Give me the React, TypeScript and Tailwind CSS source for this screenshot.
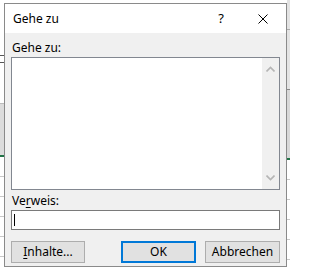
import React from "react";

const font = { fontFamily: '"Segoe UI", "Noto Sans", "Open Sans", sans-serif' };

function Chevron({ up }: { up?: boolean }) {
  return (
    <svg width="9" height="6" viewBox="0 0 9 6" className="block">
      <path
        d={up ? "M0.5 5.5 L4.5 1.5 L8.5 5.5" : "M0.5 0.5 L4.5 4.5 L8.5 0.5"}
        fill="none"
        stroke="#b5b5b5"
        strokeWidth="1.6"
      />
    </svg>
  );
}

export default function App() {
  return (
    <div
      className="relative w-[290px] h-[273px] overflow-hidden bg-white pl-[4px] pt-[3px] text-[12px] text-black"
      style={font}
    >
      {/* background spreadsheet hints */}
      <div className="absolute left-0 top-0 w-[4px] h-[273px] flex flex-col">
        <div className="h-[55px] bg-white" />
        <div className="h-[8px] border-y border-[#555] bg-white" />
        <div className="h-[40px] bg-white" />
        <div className="h-[52px] bg-[#dcdcdc] border-t border-[#bbb]" />
        <div className="h-[2px] bg-[#217346]" />
        <div className="flex-1 bg-[repeating-linear-gradient(to_bottom,#ffffff_0px,#ffffff_19px,#c8c8c8_19px,#c8c8c8_20px)]" />
      </div>
      <div className="absolute right-0 top-0 w-[3px] h-[273px] flex flex-col">
        <div className="h-[30px] bg-[#e3e3e3] border-b border-[#aaa]" />
        <div className="h-[60px] bg-[#e3e3e3] border-b border-[#888]" />
        <div className="h-[68px] bg-[#d8d8d8]" />
        <div className="h-[2px] bg-[#217346]" />
        <div className="flex-1 bg-[repeating-linear-gradient(to_bottom,#ffffff_0px,#ffffff_19px,#c8c8c8_19px,#c8c8c8_20px)]" />
      </div>

      {/* dialog */}
      <div className="relative w-[283px] h-[264px] border border-[#8a8a8a] bg-[#f0f0f0] flex flex-col">
        <div className="h-[29px] bg-white flex items-center">
          <span className="pl-[8px] flex-1 leading-none">Gehe zu</span>
          <span className="w-[16px] text-center text-[13px] leading-none mr-[29px]">?</span>
          <span className="w-[10px] mr-[18px]">
            <svg width="10" height="10" viewBox="0 0 10 10" className="block">
              <path d="M0.5 0.5 L9.5 9.5 M9.5 0.5 L0.5 9.5" stroke="#000" strokeWidth="1" />
            </svg>
          </span>
        </div>
        <div className="flex flex-col px-[6px] pt-[7px]">
          <div className="h-[16px] leading-[16px] pl-[1px]">Gehe zu:</div>
          <div className="mt-[1px] h-[133px] border border-[#828790] bg-white flex justify-end">
            <div className="w-[17px] bg-[#f0f0f0] flex flex-col justify-between items-center py-[8px]">
              <Chevron up />
              <Chevron />
            </div>
          </div>
          <div className="mt-[3px] h-[16px] leading-[16px] pl-[1px]">
            Ve<span className="underline underline-offset-2">r</span>weis:
          </div>
          <div className="mt-[1px] h-[20px] border border-[#7a7a7a] bg-white flex items-center pl-[2px]">
            <div className="w-[1px] h-[12px] bg-black" />
          </div>
          <div className="mt-[11px] flex items-center">
            <div className="w-[74px] h-[22px] border border-[#adadad] bg-[#e1e1e1] flex items-center justify-center">
              <span>
                <span className="underline underline-offset-2">I</span>nhalte...
              </span>
            </div>
            <div className="ml-[36px] w-[75px] h-[22px] border-2 border-[#0078d7] bg-[#e1e1e1] flex items-center justify-center">
              OK
            </div>
            <div className="ml-[9px] w-[75px] h-[22px] border border-[#adadad] bg-[#e1e1e1] flex items-center justify-center">
              Abbrechen
            </div>
          </div>
        </div>
      </div>
    </div>
  );
}
